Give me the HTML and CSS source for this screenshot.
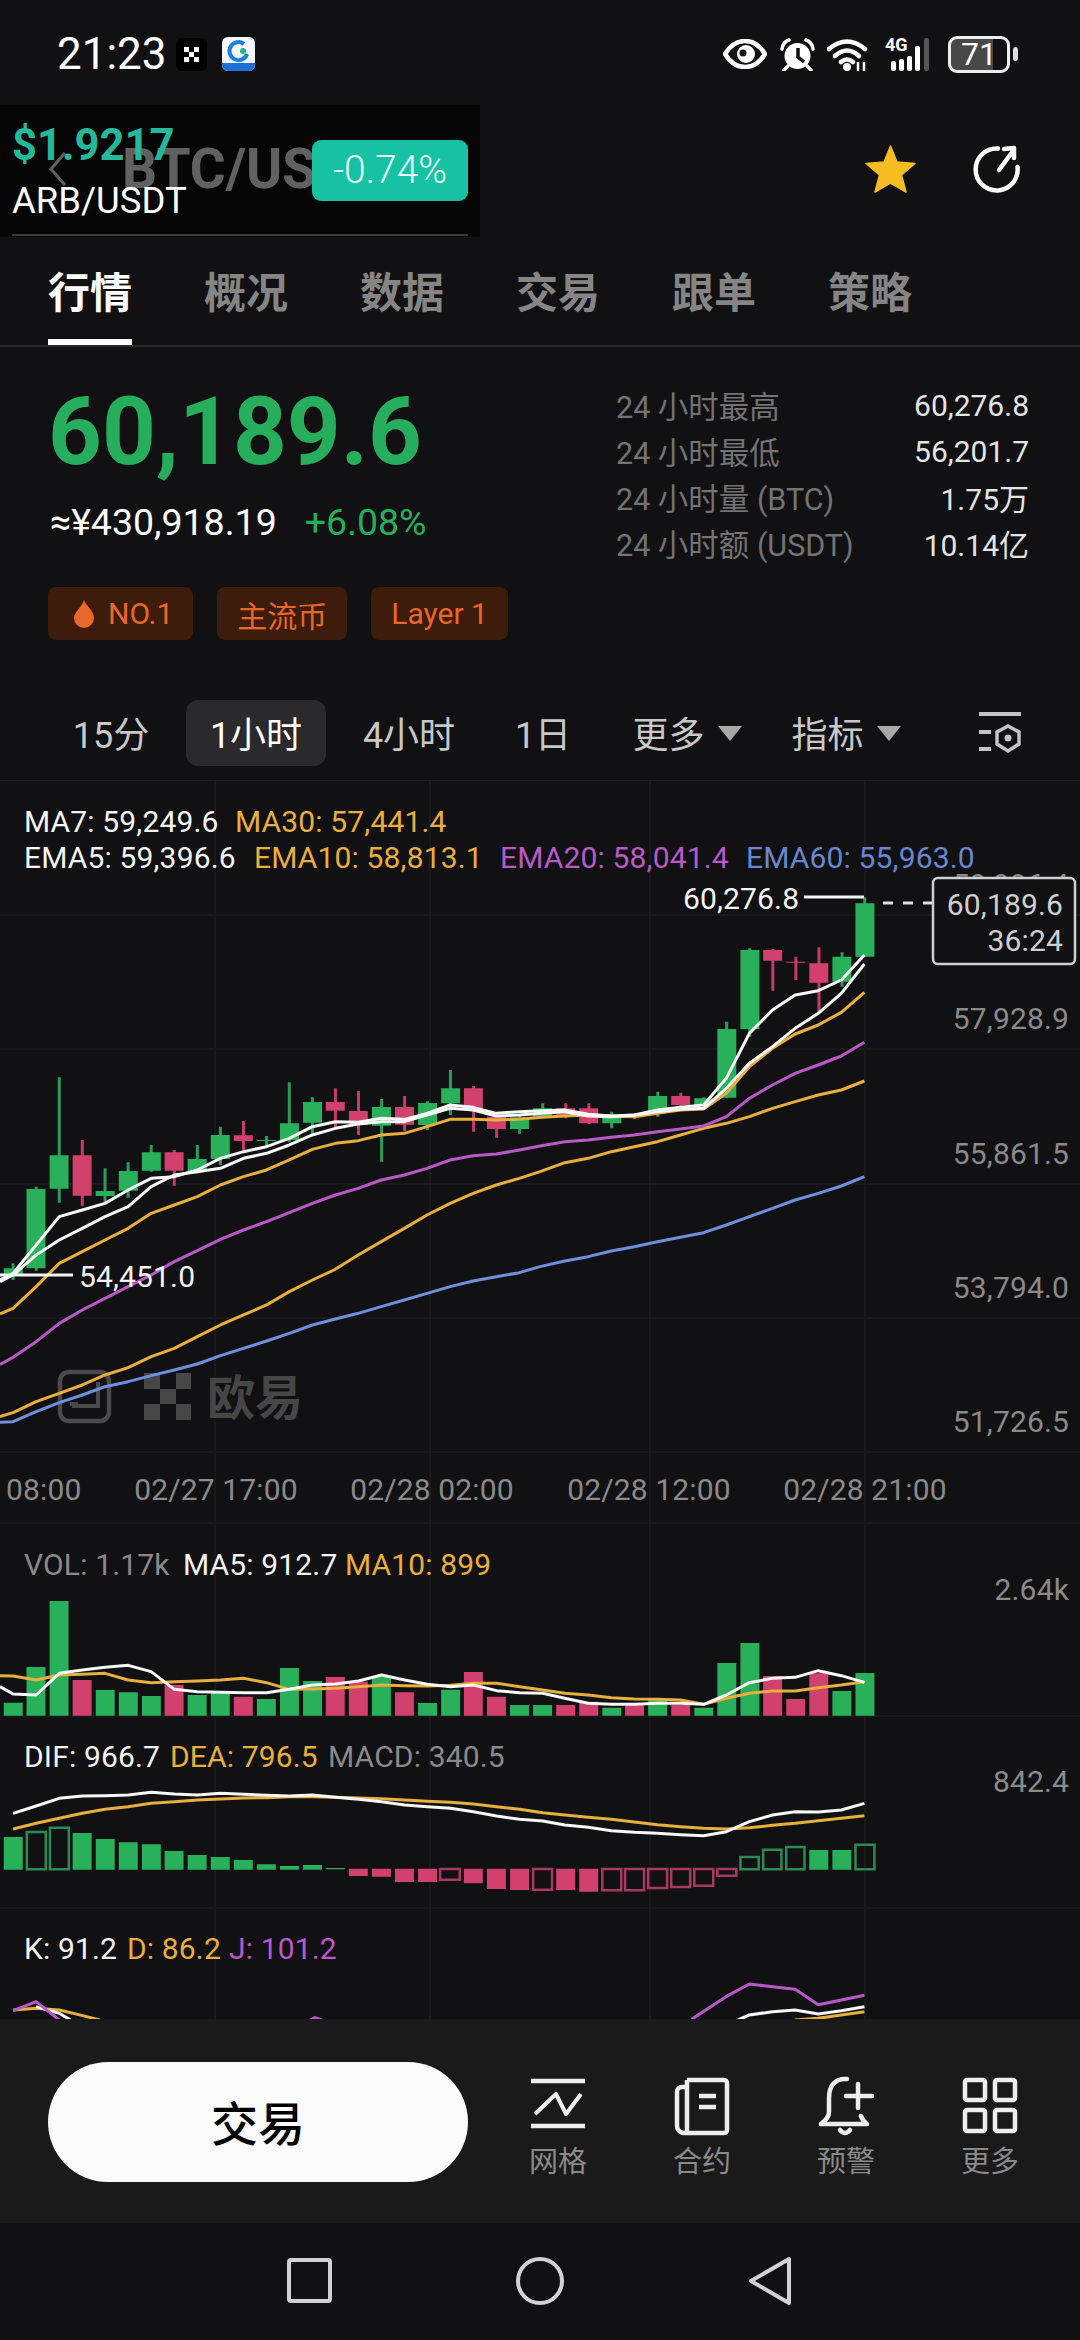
FILE: index.html
```html
<!DOCTYPE html>
<html lang="zh">
<head>
<meta charset="utf-8">
<title>BTC/USDT</title>
<link rel="stylesheet" href="styles.css">
</head>
<body>
<div class="screen">
  <div class="status">
    <span class="clock">21:23</span>
    <svg class="app-okx" viewBox="0 0 31 33"><rect width="31" height="33" rx="6" fill="#000"/><path d="M8 9h5v5H8zM18 9h5v5h-5zM13 14h5v5h-5zM8 19h5v5H8zM18 19h5v5h-5z" fill="#fff"/></svg>
    <svg class="app-blue" viewBox="0 0 33 34"><rect width="33" height="34" rx="6" fill="#f4f8fc"/><path d="M0 26h33v2a6 6 0 0 1-6 6H6a6 6 0 0 1-6-6z" fill="#1f6fd6"/><path d="M22 7a9 9 0 1 0 3 10" fill="none" stroke="#1f7fe0" stroke-width="4"/><circle cx="21" cy="14" r="3" fill="#25b58c"/></svg>
    <div class="status-right">
      <svg class="st-eye" viewBox="0 0 44 30"><path d="M2 15C8 5 15 2 22 2s14 3 20 13c-6 10-13 13-20 13S8 25 2 15z" fill="none" stroke="#fff" stroke-width="4.500" stroke-linejoin="round"/><circle cx="23" cy="15" r="9" fill="#fff"/><circle cx="20" cy="14" r="3.500" fill="#111"/></svg>
      <svg class="st-alarm" viewBox="0 0 37 33"><circle cx="18.500" cy="18" r="13" fill="#fff"/><path d="M19 10v9l6 5" fill="none" stroke="#111" stroke-width="3.500"/><path d="M3 11Q4 4 10 2M34 11Q33 4 27 2M9 28l-4 4M28 28l4 4" fill="none" stroke="#fff" stroke-width="3.500" stroke-linecap="round"/></svg>
      <svg class="st-wifi" viewBox="0 0 45 33"><path d="M2 11Q20-4 38 11M8 18Q20 7 32 18M14 24q6-5 12 0" fill="none" stroke="#fff" stroke-width="4.500" stroke-linecap="round"/><circle cx="20" cy="29" r="4" fill="#fff"/><path d="M31 24v9M37 24v9" stroke="#fff" stroke-width="2.500"/></svg>
      <div class="st-cell"><span class="cell-4g">4G</span><i class="bar b1"></i><i class="bar b2"></i><i class="bar b3"></i><i class="bar b4"></i><i class="bar b5"></i></div>
      <div class="st-batt"><div class="batt-box"><span class="batt-num">71</span></div><i class="batt-nub"></i></div>
    </div>
  </div>

  <div class="header">
    <svg class="back" viewBox="0 0 20 38"><path d="M17 3 3 19l14 16" fill="none" stroke="#fff" stroke-width="3"/></svg>
    <span class="pair">BTC/USDT</span>
    <svg class="star" viewBox="0 0 51 48"><path d="M25.500 1 32 17l18 1.500L36.500 30l4.500 17-15.500-9L10 47l4.500-17L1 18.500 19 17z" fill="#f5bd23" stroke="#f5bd23" stroke-linejoin="round" stroke-width="1.500"/></svg>
    <svg class="share" viewBox="0 0 48 48"><path d="M26 3.500A21 21 0 1 0 45.500 22" fill="none" stroke="#fff" stroke-width="4.500" stroke-linecap="round"/><path d="M27 25 41 6M32 4l10-1v10" fill="none" stroke="#fff" stroke-width="4.500" stroke-linecap="round" stroke-linejoin="round"/></svg>
    <div class="ticker">
      <div class="ticker-info">
        <div class="ticker-price">$1.9217</div>
        <div class="ticker-name">ARB/USDT</div>
      </div>
      <div class="ticker-badge">-0.74%</div>
      <div class="ticker-rule"></div>
    </div>
  </div>

  <div class="tabs">
    <div class="tab active">行情</div>
    <div class="tab">概况</div>
    <div class="tab">数据</div>
    <div class="tab">交易</div>
    <div class="tab">跟单</div>
    <div class="tab">策略</div>
  </div>

  <div class="summary">
    <div class="summary-left">
      <div class="price">60,189.6</div>
      <div class="sub"><span class="cny">≈¥430,918.19</span><span class="chg">+6.08%</span></div>
      <div class="tags">
        <div class="tag"><svg class="flame" viewBox="0 0 24 28"><path d="M12 0c1 5 10 10 10 18a10 10 0 0 1-20 0C2 12 10 7 12 0z" fill="#e8672a"/></svg>NO.1</div>
        <div class="tag">主流币</div>
        <div class="tag">Layer 1</div>
      </div>
    </div>
    <div class="stats">
      <div class="stat"><span class="stat-k">24 小时最高</span><span class="stat-v">60,276.8</span></div>
      <div class="stat"><span class="stat-k">24 小时最低</span><span class="stat-v">56,201.7</span></div>
      <div class="stat"><span class="stat-k">24 小时量 (BTC)</span><span class="stat-v">1.75万</span></div>
      <div class="stat"><span class="stat-k">24 小时额 (USDT)</span><span class="stat-v">10.14亿</span></div>
    </div>
  </div>

  <div class="periods">
    <div class="period">15分</div>
    <div class="period active">1小时</div>
    <div class="period">4小时</div>
    <div class="period">1日</div>
    <div class="period">更多<i class="caret"></i></div>
    <div class="period">指标<i class="caret"></i></div>
    <div class="period"><svg class="filter" viewBox="0 0 44 42"><path d="M1 3h42M1 21h12M1 38h12" fill="none" stroke="#c4c4c4" stroke-width="4"/><path d="M30 15l11 6v12l-11 7-11-7V21z" fill="none" stroke="#c4c4c4" stroke-width="3.500"/><circle cx="30" cy="27" r="3.500" fill="#c4c4c4"/></svg></div>
  </div>

  <svg class="chart" viewBox="0 781 1080 1238" xmlns="http://www.w3.org/2000/svg">
    <path class="grid" d="M0 915H1080M0 1049H1080M0 1184H1080M0 1318H1080M0 1452H1080M0 1523H1080M0 1716H1080M0 1908H1080M215 781V2019M430 781V2019M650 781V2019M865 781V2019"/>

    <g class="wm">
      <rect class="wm-box" x="60" y="1372" width="49" height="49" rx="9"/>
      <path class="wm-in" d="M98 1382v24H72M70 1404h8"/>
      <path class="wm-fill" d="M144 1373h16v16h-16zM176 1373h15v16h-15zM160 1389h16v15h-16zM144 1404h16v16h-16zM176 1404h15v16h-15z"/>
      <text class="wm-text" x="207" y="1415">欧易</text>
    </g>

    <g transform="translate(0 780) scale(.34439 .33333)">
      <path class="wick g" d="M38 1450V1500M105 1220V1472M172 892V1268M305 1165V1265M372 1147V1253M439 1095V1175M573 1095V1180M640 1040V1155M774 1068V1100M840 907V1085M907 952V1066M1108 957V1145M1241 964V1050M1308 870V1005M1509 1005V1062M1576 970V1015M1776 995V1045M1910 935V1010M2044 952V980M2110 725V955M2177 505V770M2445 517V620M2511 352V530"/>
      <path class="wick r" d="M239 1080V1278M506 1110V1217M707 1023V1110M974 925V1045M1041 933V1065M1175 948V1053M1375 918V1055M1442 1005V1073M1643 970V1015M1710 970V1032M1843 1000V1018M1977 938V985M2244 507V632M2311 530V600M2378 502V695"/>
      <path class="fill-g" d="M11 1465h55v20h-55zM77 1227h55v238h-55zM144 1126h55v100h-55zM278 1233h55v15h-55zM345 1173h55v59h-55zM412 1117h55v55h-55zM545 1137h55v38h-55zM612 1065h55v72h-55zM746 1080h55v3h-55zM813 1030h55v50h-55zM880 966h55v62h-55zM1080 981h55v56h-55zM1214 969h55v66h-55zM1281 925h55v45h-55zM1481 1012h55v35h-55zM1548 985h55v25h-55zM1749 1005h55v25h-55zM1882 948h55v52h-55zM2016 955h55v20h-55zM2083 747h55v206h-55zM2150 510h55v237h-55zM2417 530h55v75h-55zM2484 370h55v160h-55z"/>
      <path class="fill-r" d="M211 1126h55v121h-55zM478 1117h55v55h-55zM679 1066h55v17h-55zM946 966h55v26h-55zM1013 993h55v42h-55zM1147 981h55v53h-55zM1347 925h55v60h-55zM1414 1010h55v37h-55zM1615 985h55v23h-55zM1682 985h55v45h-55zM1815 1005h55v7h-55zM1949 948h55v27h-55zM2216 510h55v32h-55zM2283 545h55v3h-55zM2350 550h55v58h-55z"/>

      <polyline class="ln blue" points="0,1927 38,1925 105,1895 172,1868 239,1845 305,1820 372,1805 439,1787 506,1770 573,1752 640,1727 707,1705 774,1683 840,1660 907,1635 974,1617 1040,1600 1107,1580 1174,1560 1240,1540 1307,1520 1374,1503 1441,1490 1508,1478 1568,1460 1640,1443 1708,1430 1775,1413 1842,1400 1909,1385 1976,1372 2043,1358 2109,1335 2176,1310 2243,1285 2309,1260 2376,1240 2443,1218 2510,1190"/>
      <polyline class="ln orange" points="0,1910 38,1898 105,1865 172,1840 239,1815 305,1785 372,1763 439,1730 506,1705 573,1670 640,1635 707,1605 774,1575 840,1535 907,1500 970,1470 1040,1425 1107,1385 1174,1345 1240,1305 1307,1270 1374,1240 1441,1215 1508,1195 1568,1175 1640,1148 1708,1135 1775,1115 1842,1100 1909,1085 1976,1065 2043,1045 2109,1030 2176,1010 2243,985 2309,965 2376,945 2443,930 2510,903"/>
      <polyline class="ln purple" points="0,1753 38,1732 105,1685 172,1630 239,1590 305,1555 372,1520 439,1485 506,1445 573,1412 640,1378 707,1350 774,1325 840,1298 907,1270 974,1245 1040,1225 1107,1200 1174,1185 1240,1165 1307,1140 1374,1127 1441,1122 1508,1110 1568,1098 1640,1085 1708,1080 1775,1072 1842,1065 1909,1055 1976,1047 2043,1038 2109,1010 2176,955 2243,915 2309,880 2376,855 2443,828 2510,787"/>
      <polyline class="ln orange" points="0,1602 38,1585 105,1520 172,1450 239,1415 305,1380 372,1345 439,1300 506,1275 573,1250 640,1215 707,1190 774,1170 840,1140 907,1108 974,1090 1040,1082 1107,1065 1174,1060 1240,1040 1307,1018 1374,1018 1441,1020 1508,1018 1573,1012 1640,1008 1708,1005 1775,1008 1842,1010 1909,1000 1976,990 2043,987 2109,940 2176,860 2243,805 2309,762 2376,735 2443,697 2510,637"/>
      <polyline class="ln white" points="0,1505 38,1485 105,1425 172,1380 239,1345 305,1310 372,1280 439,1220 506,1185 573,1175 640,1165 707,1135 774,1120 840,1095 907,1065 974,1045 1040,1032 1107,1025 1174,1025 1240,1005 1307,985 1374,990 1441,1008 1508,1005 1573,1000 1640,995 1708,1008 1775,1010 1842,1005 1909,995 1976,988 2043,985 2109,925 2176,850 2243,800 2309,745 2376,700 2443,640 2510,552"/>
      <polyline class="ln white" points="0,1500 38,1480 105,1395 172,1310 239,1290 305,1270 372,1230 439,1195 506,1190 573,1170 640,1135 707,1115 774,1100 840,1075 907,1040 974,1025 1040,1027 1107,1015 1174,1018 1240,1000 1307,975 1374,982 1441,1000 1508,995 1573,992 1640,990 1708,1003 1775,1008 1842,1005 1909,990 1976,982 2043,975 2109,895 2176,760 2243,690 2309,645 2376,632 2443,600 2510,525"/>
    </g>

    <g transform="translate(0 1530) scale(.34439 .33333)">
      <path class="fill-g" d="M11 518h55V557h-55zM77 411h55V557h-55zM144 213h55V557h-55zM278 480h55V557h-55zM345 487h55V557h-55zM412 498h55V557h-55zM545 495h55V557h-55zM612 483h55V557h-55zM746 507h55V557h-55zM813 414h55V557h-55zM880 453h55V557h-55zM1080 440h55V557h-55zM1214 519h55V557h-55zM1281 479h55V557h-55zM1481 525h55V557h-55zM1548 525h55V557h-55zM1749 533h55V557h-55zM1882 510h55V557h-55zM2016 533h55V557h-55zM2083 399h55V557h-55zM2150 339h55V557h-55zM2417 483h55V557h-55zM2484 429h55V557h-55z"/>
      <path class="fill-r" d="M211 450h55V557h-55zM478 465h55V557h-55zM679 500h55V557h-55zM946 441h55V557h-55zM1013 455h55V557h-55zM1147 487h55V557h-55zM1347 426h55V557h-55zM1414 500h55V557h-55zM1615 525h55V557h-55zM1682 515h55V557h-55zM1815 525h55V557h-55zM1949 525h55V557h-55zM2216 438h55V557h-55zM2283 507h55V557h-55zM2350 430h55V557h-55z"/>
      <polyline class="ln orange" points="0,437 38,438 105,450 172,435 239,433 305,430 372,450 439,458 506,455 573,453 640,450 707,445 774,458 840,478 907,477 974,475 1041,470 1108,465 1175,467 1241,468 1308,466 1375,460 1442,460 1509,470 1576,480 1640,490 1708,495 1775,503 1842,507 1909,508 1976,510 2043,523 2109,505 2176,490 2243,483 2309,483 2376,473 2443,465 2510,455"/>
      <polyline class="ln white" points="0,470 38,492 105,495 172,430 239,420 305,412 372,406 439,425 506,478 573,485 640,487 707,488 774,488 840,478 907,465 974,462 1041,453 1108,435 1175,450 1241,463 1308,470 1375,465 1442,482 1509,488 1576,490 1640,505 1708,520 1775,523 1842,523 1909,520 1976,520 2043,523 2109,495 2176,458 2243,445 2309,442 2376,422 2443,437 2510,457"/>

      <polyline class="ln orange" points="38,897 105,880 172,865 239,850 305,838 372,830 439,820 506,815 573,810 640,807 707,804 774,803 840,800 907,800 974,802 1041,804 1108,806 1175,810 1241,814 1308,817 1375,822 1442,830 1509,838 1576,848 1640,855 1708,862 1775,868 1842,876 1909,884 1976,890 2043,895 2109,897 2176,893 2243,886 2309,880 2376,872 2443,865 2510,857"/>
      <polyline class="ln white" points="38,850 105,828 172,805 239,798 305,797 372,795 439,787 506,792 573,795 640,790 707,793 774,796 840,798 907,795 974,802 1041,808 1108,815 1175,825 1241,830 1308,835 1375,845 1442,858 1509,868 1576,873 1640,885 1708,892 1775,902 1842,907 1909,910 1976,914 2043,917 2109,905 2176,875 2243,855 2309,845 2376,846 2443,840 2510,820"/>
      <path class="fill-g" d="M11 921h55V1019h-55zM211 909h55V1019h-55zM278 927h55V1019h-55zM345 937h55V1019h-55zM412 943h55V1019h-55zM478 963h55V1019h-55zM545 975h55V1019h-55zM612 981h55V1019h-55zM679 990h55V1019h-55zM746 1003h55V1019h-55zM813 1008h55V1019h-55zM880 1005h55V1019h-55zM946 1014h55V1018h-55zM2350 960h55V1019h-55zM2417 960h55V1019h-55z"/>
      <path class="fill-r" d="M1013 1016h55V1038h-55zM1080 1016h55V1040h-55zM1147 1016h55V1056h-55zM1214 1016h55V1056h-55zM1347 1016h55V1060h-55zM1414 1016h55V1077h-55zM1481 1016h55V1080h-55zM1615 1016h55V1080h-55zM1682 1016h55V1085h-55z"/>
      <path class="hollow g" d="M78 906h55V1018h-55zM145 893h55V1018h-55zM2150 981h53V1018h-53zM2216 959h53V1018h-53zM2283 951h53V1018h-53zM2484 944h55V1018h-55z"/>
      <path class="hollow r" d="M1278 1017h57V1049h-57zM1548 1017h55V1079h-55zM1749 1017h55V1081h-55zM1815 1017h55V1081h-55zM1882 1017h55V1074h-55zM1949 1017h55V1071h-55zM2016 1017h55V1067h-55zM2083 1017h55V1037h-55z"/>

      <polyline class="ln orange" points="38,1440 105,1435 172,1440 240,1457 290,1470"/>
      <polyline class="ln white" points="105,1430 172,1450 205,1470"/>
      <polyline class="ln purple" points="38,1442 105,1415 172,1470"/>
      <polyline class="ln purple" points="900,1470 915,1463 935,1470"/>
      <polyline class="ln purple" points="2008,1468 2108,1400 2176,1362 2243,1370 2309,1378 2376,1424 2443,1410 2510,1396"/>
      <polyline class="ln orange" points="2308,1470 2376,1465 2443,1455 2510,1445"/>
      <polyline class="ln white" points="2143,1470 2176,1455 2243,1445 2309,1440 2376,1452 2443,1442 2510,1430"/>
    </g>

    <text class="t c-w" x="24" y="832">MA7: 59,249.6</text>
    <text class="t c-o" x="235" y="832">MA30: 57,441.4</text>
    <text class="t c-w" x="24" y="868">EMA5: 59,396.6</text>
    <text class="t c-o" x="254" y="868">EMA10: 58,813.1</text>
    <text class="t c-p" x="500" y="868">EMA20: 58,041.4</text>
    <text class="t c-b" x="746" y="868">EMA60: 55,963.0</text>

    <text class="t axis end" x="1069" y="895">59,996.4</text>
    <text class="t axis end" x="1069" y="1029">57,928.9</text>
    <text class="t axis end" x="1069" y="1164">55,861.5</text>
    <text class="t axis end" x="1069" y="1298">53,794.0</text>
    <text class="t axis end" x="1069" y="1432">51,726.5</text>

    <path class="mark" d="M804 897H864M0 1275H73"/>
    <path class="dash" d="M883 903H933"/>
    <text class="t c-w" x="683" y="909">60,276.8</text>
    <text class="t c-w" x="79" y="1287">54,451.0</text>

    <rect class="tip" x="933" y="878" width="142" height="86" rx="5"/>
    <text class="t tip-t end" x="1063" y="915">60,189.6</text>
    <text class="t tip-t end" x="1063" y="951">36:24</text>

    <text class="t axis" x="6" y="1500">08:00</text>
    <text class="t axis mid" x="216" y="1500">02/27 17:00</text>
    <text class="t axis mid" x="432" y="1500">02/28 02:00</text>
    <text class="t axis mid" x="649" y="1500">02/28 12:00</text>
    <text class="t axis mid" x="865" y="1500">02/28 21:00</text>

    <text class="t axis" x="24" y="1575">VOL: 1.17k</text>
    <text class="t c-w" x="183" y="1575">MA5: 912.7</text>
    <text class="t c-o" x="345" y="1575">MA10: 899</text>
    <text class="t axis end" x="1069" y="1600">2.64k</text>

    <text class="t c-w" x="24" y="1767">DIF: 966.7</text>
    <text class="t c-o" x="170" y="1767">DEA: 796.5</text>
    <text class="t axis" x="328" y="1767">MACD: 340.5</text>
    <text class="t axis end" x="1069" y="1792">842.4</text>

    <text class="t c-w" x="24" y="1959">K: 91.2</text>
    <text class="t c-o" x="127" y="1959">D: 86.2</text>
    <text class="t c-p" x="229" y="1959">J: 101.2</text>
  </svg>

  <div class="actionbar">
    <div class="trade">交易</div>
    <div class="actions">
      <div class="action">
        <svg viewBox="0 0 60 60"><path d="M3 5h54M3 50h54" fill="none" stroke="#eee" stroke-width="4.500"/><path d="M7 38l21-20 10 20 15-20" fill="none" stroke="#eee" stroke-width="4" stroke-linejoin="round"/></svg>
        <span>网格</span>
      </div>
      <div class="action">
        <svg viewBox="0 0 60 60"><path d="M15 4h37a3 3 0 0 1 3 3v47a3 3 0 0 1-3 3H12a7 7 0 0 1-7-7V16a5 5 0 0 1 5-5h5M15 4v53" fill="none" stroke="#eee" stroke-width="4.500" stroke-linejoin="round"/><path d="M27 20h17M27 31h17" stroke="#eee" stroke-width="4.500"/></svg>
        <span>合约</span>
      </div>
      <div class="action">
        <svg viewBox="0 0 60 60"><path d="M31 3C18 2 13 11 13 22v14c0 5-3 8-8 12h46c-3-2-5-5-6-8" fill="none" stroke="#eee" stroke-width="4.500" stroke-linecap="round" stroke-linejoin="round"/><path d="M24 54q5 6 10 0M42 8v24M30 20h26" fill="none" stroke="#eee" stroke-width="4.500" stroke-linecap="round"/></svg>
        <span>预警</span>
      </div>
      <div class="action">
        <svg viewBox="0 0 60 60"><path d="M7 4h16a2 2 0 0 1 2 2v16a2 2 0 0 1-2 2H7a2 2 0 0 1-2-2V6a2 2 0 0 1 2-2zM37 4h16a2 2 0 0 1 2 2v16a2 2 0 0 1-2 2H37a2 2 0 0 1-2-2V6a2 2 0 0 1 2-2zM7 34h16a2 2 0 0 1 2 2v17a2 2 0 0 1-2 2H7a2 2 0 0 1-2-2V36a2 2 0 0 1 2-2zM37 34h16a2 2 0 0 1 2 2v17a2 2 0 0 1-2 2H37a2 2 0 0 1-2-2V36a2 2 0 0 1 2-2z" fill="none" stroke="#eee" stroke-width="4.500"/></svg>
        <span>更多</span>
      </div>
    </div>
  </div>

  <div class="navbar">
    <svg viewBox="0 0 60 60"><rect x="9" y="9" width="41" height="41" rx="2" fill="none" stroke="#d2d2d2" stroke-width="4"/></svg>
    <svg viewBox="0 0 60 60"><circle cx="30" cy="30" r="22" fill="none" stroke="#d2d2d2" stroke-width="4"/></svg>
    <svg viewBox="0 0 60 60"><path d="M49 8v44L11 30z" fill="none" stroke="#d2d2d2" stroke-width="4" stroke-linejoin="round"/></svg>
  </div>
</div>
</body>
</html>
```
FILE: styles.css
```css
* { box-sizing: border-box; }
html, body { margin: 0; padding: 0; background: #111113; }
body { font-family: Roboto, "Noto Sans CJK SC", sans-serif; color: #fff; }
.screen { width: 1080px; height: 2340px; overflow: hidden; display: flex; flex-direction: column; background: #111113; }

/* status bar */
.status { height: 105px; padding: 3px 62px 0 57px; display: flex; align-items: center; flex: none; }
.clock { font-size: 44px; font-weight: 400; color: #fff; width: 119px; }
.app-okx { width: 31px; height: 33px; margin-right: 15px; }
.app-blue { width: 33px; height: 34px; }
.status-right { margin-left: auto; display: flex; align-items: center; }
.st-eye { width: 44px; height: 30px; margin-right: 12px; }
.st-alarm { width: 37px; height: 33px; margin-right: 11px; }
.st-wifi { width: 45px; height: 33px; margin-right: 13px; }
.st-cell { width: 48px; height: 33px; position: relative; margin-right: 15px; display: flex; align-items: flex-end; gap: 3px; padding-left: 6px; }
.cell-4g { position: absolute; left: 0; top: -2px; font-size: 18px; font-weight: 700; line-height: 18px; color: #fff; }
.bar { display: block; width: 5px; border-radius: 2px; background: #fff; }
.b1 { height: 10px; }
.b2 { height: 12px; }
.b3 { height: 15px; }
.b4 { height: 25px; }
.b5 { height: 33px; background: #555; margin-left: 1px; }
.st-batt { display: flex; align-items: center; gap: 3px; }
.batt-box { width: 62px; height: 37px; border: 3px solid #eee; border-radius: 9px; background: linear-gradient(90deg, #484848 75%, #111113 75%); display: flex; align-items: center; padding-left: 10px; }
.batt-num { font-size: 32px; line-height: 30px; color: #fff; }
.batt-nub { display: block; width: 5px; height: 14px; border-radius: 3px; background: #ddd; }

/* header */
.header { height: 127px; flex: none; position: relative; display: flex; align-items: center; padding: 0 60px 0 48px; }
.back { width: 20px; height: 38px; }
.pair { font-size: 55px; font-weight: 700; margin-left: 54px; color: #fff; }
.star { width: 51px; height: 48px; margin-left: auto; margin-right: -4px; }
.share { width: 48px; height: 48px; margin-left: 60px; }
.ticker { position: absolute; left: 0; top: 0; width: 480px; height: 132px; background: rgba(0,0,0,.62); display: flex; padding: 16px 12px 0 12px; justify-content: space-between; }
.ticker-price { font-size: 43.500px; font-weight: 700; line-height: 50px; color: #25b99a; }
.ticker-name { font-size: 36.500px; line-height: 40px; margin-top: 10px; color: #fff; }
.ticker-badge { width: 156px; height: 61px; margin-top: 19px; border-radius: 9px; background: #16c2a3; text-align: center; font-size: 39px; font-weight: 300; line-height: 61px; color: #eafff9; }
.ticker-rule { position: absolute; left: 12px; right: 12px; bottom: 1px; height: 2px; background: #3a3a3a; }

/* tabs */
.tabs { height: 115px; flex: none; display: flex; gap: 72px; padding-left: 48px; border-bottom: 2px solid #2a2a2c; }
.tab { height: 113px; padding-top: 38px; width: 84px; font-size: 42px; font-weight: 700; line-height: 48px; color: #858585; white-space: nowrap; }
.tab.active { color: #fff; border-bottom: 6px solid #fff; }

/* summary */
.summary { flex: none; height: 353px; padding: 38px 51px 0 48px; display: flex; justify-content: space-between; }
.price { font-size: 94px; font-weight: 700; line-height: 94px; color: #27ae5c; }
.sub { margin-top: 23px; display: flex; gap: 28px; font-size: 37.500px; line-height: 40px; }
.cny { color: #fff; padding-left: 2px; }
.chg { color: #27ae5c; }
.tags { margin-top: 45px; display: flex; gap: 24px; }
.tag { height: 53px; padding: 0 20px; border-radius: 8px; background: #3d1c0c; color: #e8672a; font-size: 30px; display: flex; align-items: center; }
.flame { width: 24px; height: 28px; margin: 0 12px 0 4px; }
.stats { width: 413px; margin-top: -3px; }
.stat { height: 46px; display: flex; justify-content: space-between; align-items: center; font-size: 30px; }
.stat-k { color: #737373; font-size: 30.500px; }
.stat-v { color: #e4e4e4; }

/* period selector */
.periods { flex: none; height: 81px; padding: 0 0 14px 36px; border-bottom: 1px solid #1e1e20; display: grid; grid-template-columns: 150px 140px 166px 102px 186px 132px 1fr; }
.period { display: flex; align-items: center; justify-content: center; padding-bottom: 3px; font-size: 36px; color: #c8c8c8; border-radius: 12px; }
.period.active { background: #2a2a2c; color: #fff; }
.caret { display: block; margin: 4px 0 0 13px; width: 0; height: 0; border-left: 12px solid transparent; border-right: 12px solid transparent; border-top: 15px solid #a8a8a8; }
.filter { width: 44px; height: 42px; margin-left: 8px; }

/* chart */
.chart { flex: none; display: block; width: 1080px; height: 1238px; }
.grid { stroke: #1c1c1f; stroke-width: 1.5; fill: none; }
.wick { fill: none; stroke-width: 3px; vector-effect: non-scaling-stroke; }
.wick.g { stroke: #2f9a5c; }
.wick.r { stroke: #c23c67; }
.fill-g { fill: #28b05a; }
.fill-r { fill: #d2406e; }
.hollow { fill: none; stroke-width: 2.5px; vector-effect: non-scaling-stroke; }
.hollow.g { stroke: #2b8a55; }
.hollow.r { stroke: #a83a5f; }
.ln { fill: none; stroke-width: 3px; vector-effect: non-scaling-stroke; stroke-linejoin: round; }
.ln.white { stroke: #f8f8f8; }
.ln.orange { stroke: #e8ae3e; }
.ln.purple { stroke: #b959c8; }
.ln.blue { stroke: #6f8fdc; }
.t { font-family: Roboto, "Noto Sans CJK SC", sans-serif; font-size: 30px; letter-spacing: .15px; }
.c-w { fill: #f4f4f4; }
.c-o { fill: #e8ae3e; }
.c-p { fill: #b959c8; }
.c-b { fill: #6a86cf; }
.axis { fill: #8a8a8a; }
.end { text-anchor: end; }
.mid { text-anchor: middle; }
.mark { stroke: #f4f4f4; stroke-width: 3; fill: none; }
.dash { stroke: #e0e0e0; stroke-width: 3; stroke-dasharray: 10 10; fill: none; }
.tip { fill: #111113; stroke: #d0d0d0; stroke-width: 2.5; }
.tip-t { fill: #cfcfcf; }
.wm-box { fill: none; stroke: #4a4a4a; stroke-width: 4.5; }
.wm-in { fill: none; stroke: #4a4a4a; stroke-width: 4; }
.wm-fill { fill: #464646; }
.wm-text { font-family: "Noto Sans CJK SC", sans-serif; font-size: 48px; font-weight: 700; fill: #464646; }

/* bottom action bar */
.actionbar { flex: none; height: 204px; background: #1a1a1b; display: flex; padding: 43px 0 0 48px; }
.trade { width: 420px; height: 120px; border-radius: 60px; background: #fbfbfb; color: #000; font-size: 47px; font-weight: 500; display: flex; align-items: center; justify-content: center; padding-bottom: 3px; }
.actions { margin-left: 18px; margin-top: 14px; display: grid; grid-template-columns: repeat(4, 144px); }
.action { display: flex; flex-direction: column; align-items: center; font-size: 29px; color: #8a8a8a; }
.action svg { width: 60px; height: 60px; margin-bottom: 8px; }
.action span { line-height: 36px; }

/* system nav */
.navbar { flex: none; height: 117px; background: #111113; display: flex; justify-content: center; align-items: center; gap: 170px; padding-bottom: 1px; }
.navbar svg { width: 60px; height: 60px; }
```
